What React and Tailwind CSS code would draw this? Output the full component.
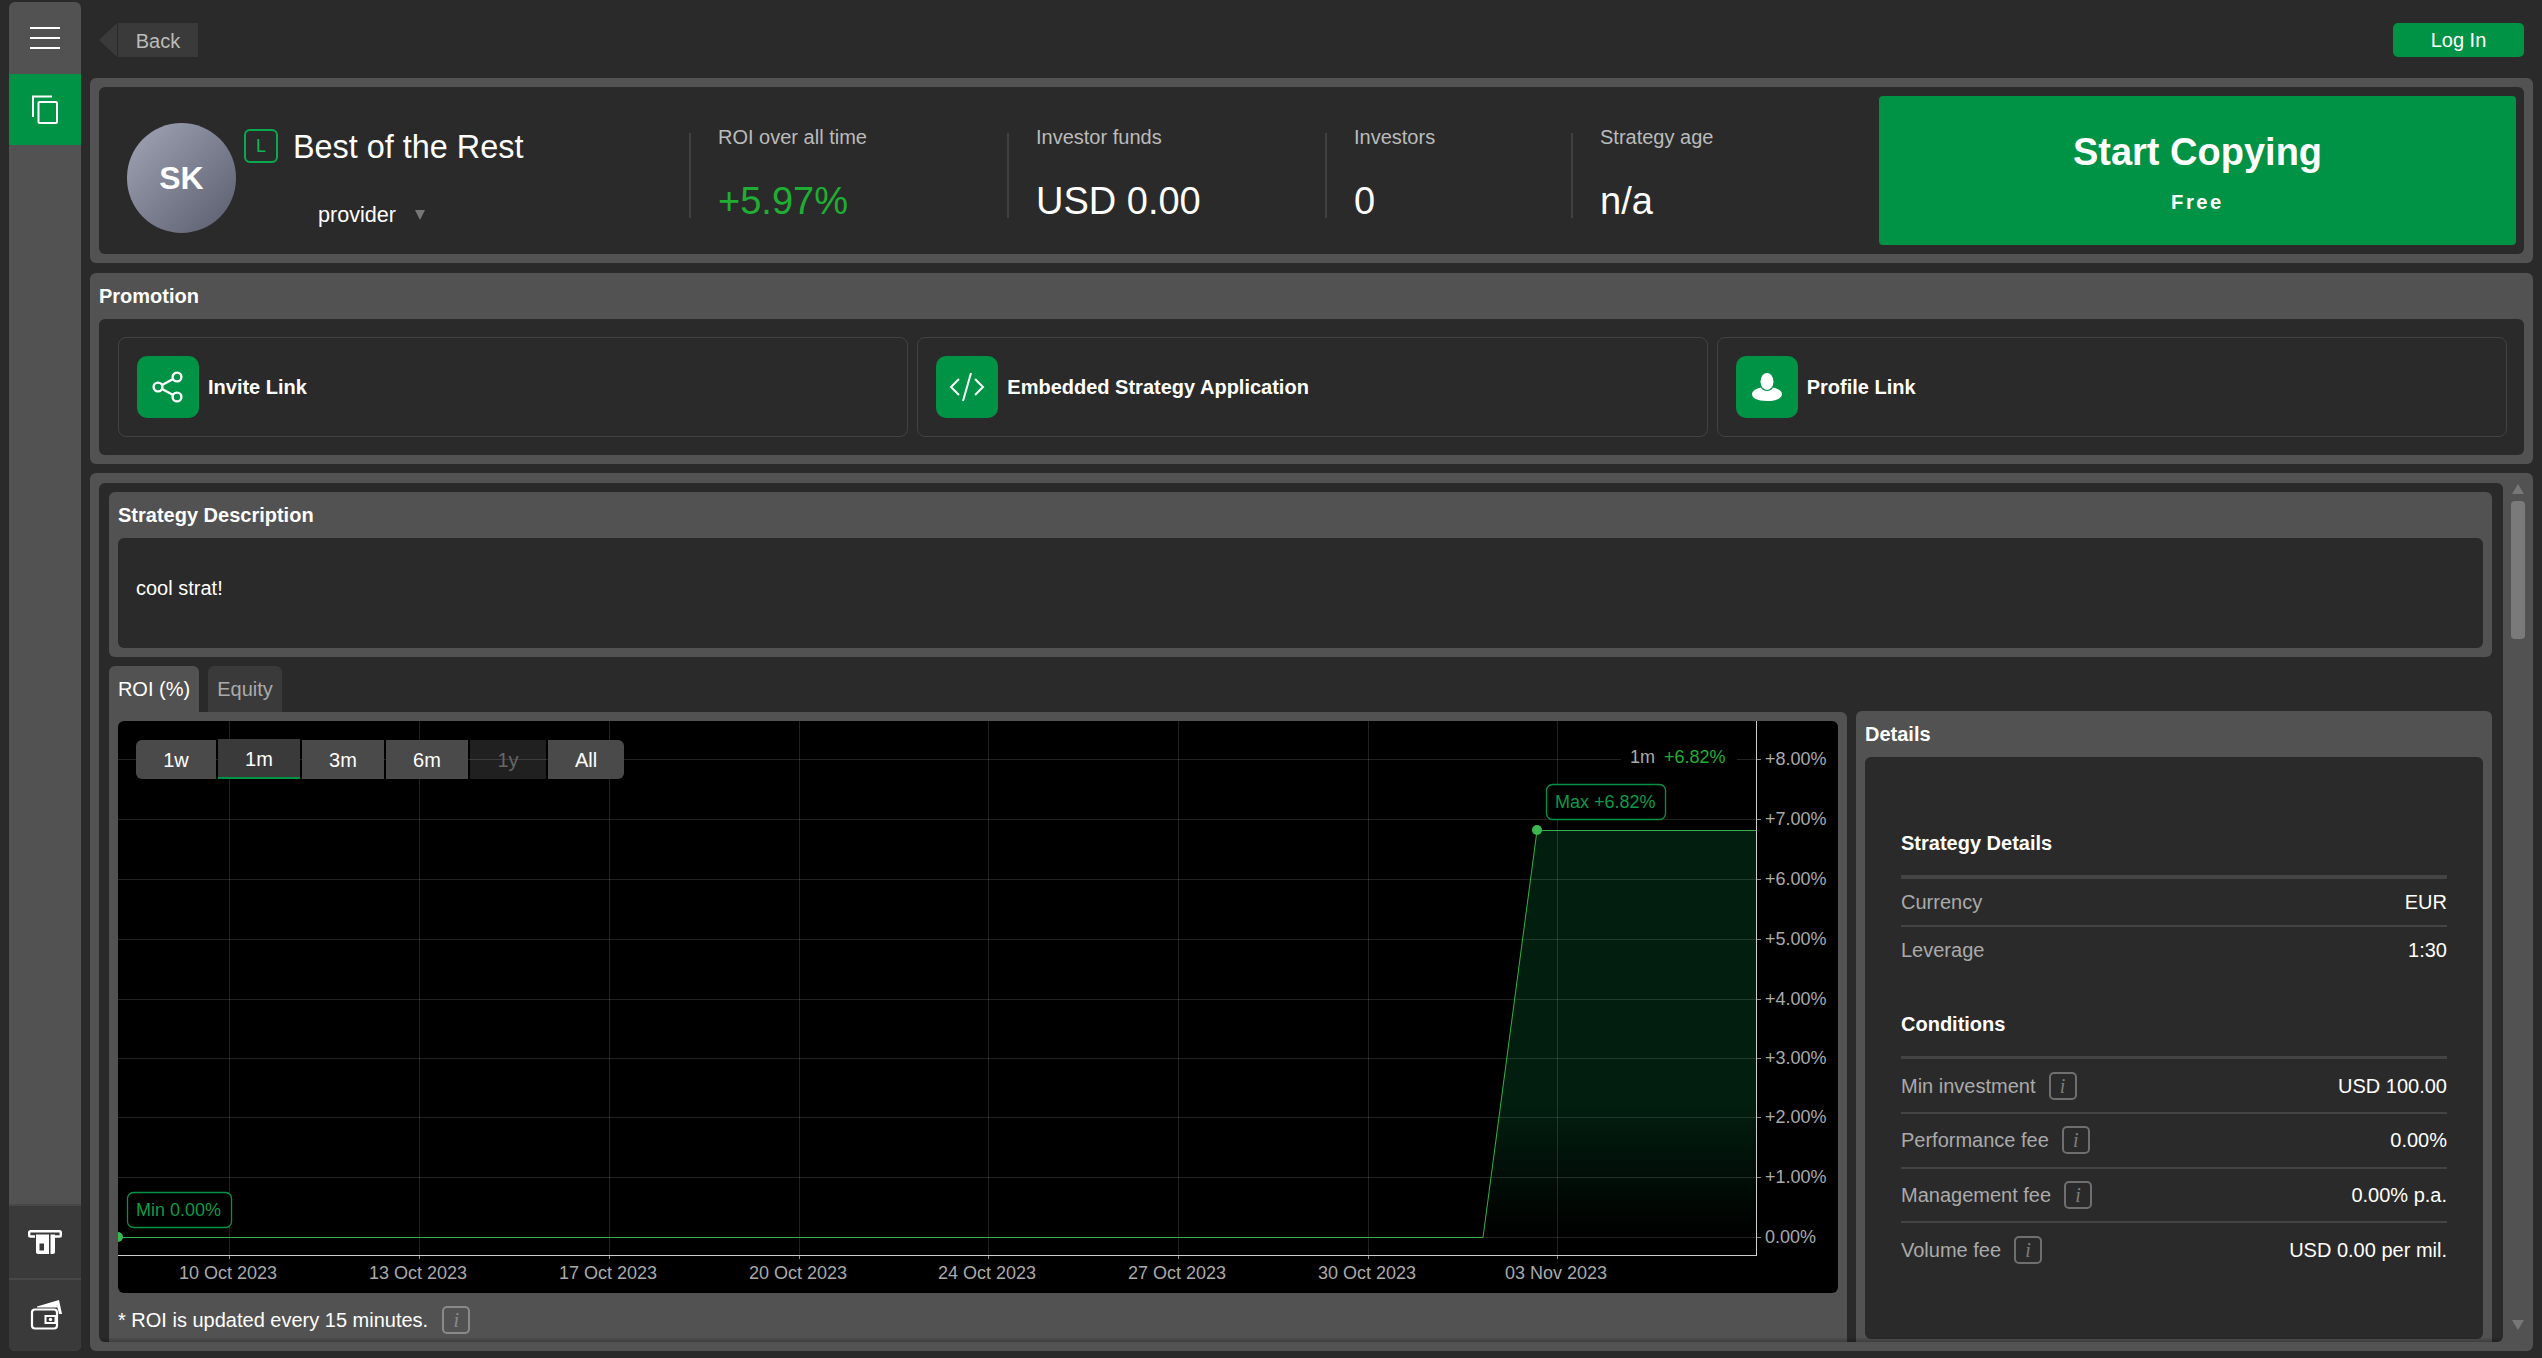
import React from "react";

const yTicks = [
  { y: 759, label: "+8.00%" },
  { y: 819, label: "+7.00%" },
  { y: 879, label: "+6.00%" },
  { y: 939, label: "+5.00%" },
  { y: 999, label: "+4.00%" },
  { y: 1058, label: "+3.00%" },
  { y: 1117, label: "+2.00%" },
  { y: 1177, label: "+1.00%" },
  { y: 1237, label: "0.00%" },
];

const xTicks = [
  { x: 229, label: "10 Oct 2023" },
  { x: 419, label: "13 Oct 2023" },
  { x: 609, label: "17 Oct 2023" },
  { x: 799, label: "20 Oct 2023" },
  { x: 988, label: "24 Oct 2023" },
  { x: 1178, label: "27 Oct 2023" },
  { x: 1368, label: "30 Oct 2023" },
  { x: 1557, label: "03 Nov 2023" },
];

const ranges = [
  { label: "1w", cls: "w-[80px] h-[39px] rounded-l-[6px] bg-[#4a4a4a] text-white" },
  { label: "1m", cls: "w-[82px] h-[40px] -mt-px pt-[2px] bg-[#3a3a3a] text-white border-b-2 border-[#009245]" },
  { label: "3m", cls: "w-[82px] h-[39px] bg-[#4a4a4a] text-white" },
  { label: "6m", cls: "w-[82px] h-[39px] bg-[#4a4a4a] text-white" },
  { label: "1y", cls: "w-[76px] h-[39px] bg-[#ffffff20] text-[#666666]" },
  { label: "All", cls: "w-[76px] h-[39px] rounded-r-[6px] bg-[#4a4a4a] text-white" },
];

function InfoIcon({ light }) {
  return (
    <span className={`inline-flex w-[28px] h-[28px] items-center justify-center rounded-[5px] border-2 font-[family-name:'Liberation_Serif',serif] italic text-[20px] leading-none ${light ? "border-[#8a8a8a] text-[#8a8a8a]" : "border-[#6f6f6f] text-[#7d7d7d]"}`}>
      i
    </span>
  );
}

function Stat({ label, value, width, green }) {
  return (
    <div className={`${width} h-[85px] self-start mt-[46px] border-l-2 border-[#404040] pl-[27px] flex flex-col justify-between`}>
      <div className="h-[8px] leading-[8px] text-[20px] text-[#bbbbbb]">{label}</div>
      <div className={`leading-[34px] text-[38px] ${green ? "text-[#1fae33]" : "text-white"}`}>{value}</div>
    </div>
  );
}

function PromoCard({ title, children }) {
  return (
    <div className="h-[100px] rounded-[8px] border border-[#424242] flex items-center pl-[18px]">
      <div className="w-[62px] h-[62px] rounded-[10px] bg-[#009245] flex items-center justify-center">{children}</div>
      <span className="ml-[9px] text-[20px] font-bold text-white">{title}</span>
    </div>
  );
}

function DetailRow({ label, value, info, h, last }) {
  return (
    <div className={`${h} flex items-center justify-between text-[20px] ${last ? "" : "border-b-2 border-[#444444]"}`}>
      <span className="flex items-center gap-[13px] text-[#aaaaaa]">
        {label}
        {info && <InfoIcon />}
      </span>
      <span className="text-white">{value}</span>
    </div>
  );
}

function Chart() {
  return (
    <div className="relative w-[1720px] h-[572px] rounded-[6px] overflow-hidden bg-black">
      <svg className="block" width="1720" height="572" viewBox="118 721 1720 572">
        <defs>
          <linearGradient id="roiFill" x1="0" y1="830" x2="0" y2="1237" gradientUnits="userSpaceOnUse">
            <stop offset="0" stopColor="#021e0f" />
            <stop offset="0.68" stopColor="#021e0f" />
            <stop offset="1" stopColor="#021e0f" stopOpacity="0" />
          </linearGradient>
        </defs>
        <polygon points="1483,1237 1537,830 1756.500,830 1756.500,1237" fill="url(#roiFill)" />
        {yTicks.map((t) => (
          <g key={t.y}>
            <line x1="118" x2="1756.5" y1={t.y + 0.5} y2={t.y + 0.5} stroke="#ffffff" strokeOpacity="0.13" />
            <line x1="1756.5" x2="1761" y1={t.y + 0.5} y2={t.y + 0.5} stroke="#888888" />
            <text x="1765" y={t.y + 5.5} fontSize="18" fill="#aaaaaa">{t.label}</text>
          </g>
        ))}
        {xTicks.map((t) => (
          <g key={t.x}>
            <line x1={t.x + 0.5} x2={t.x + 0.5} y1="721" y2="1255" stroke="#ffffff" strokeOpacity="0.13" />
            <line x1={t.x + 0.5} x2={t.x + 0.5} y1="1255" y2="1259" stroke="#888888" />
            <text x={t.x - 1} y="1279" fontSize="18" fill="#aaaaaa" textAnchor="middle">{t.label}</text>
          </g>
        ))}
        <line x1="1756.5" x2="1756.5" y1="721" y2="1255.5" stroke="#cccccc" />
        <line x1="118" x2="1757" y1="1255.5" y2="1255.5" stroke="#cccccc" />
        <polyline points="118,1237.5 1483,1237.5 1537,830.5 1756.5,830.5" fill="none" stroke="#34b04c" strokeWidth="1" />
        <circle cx="1537" cy="830" r="5" fill="#3cb850" />
        <circle cx="118" cy="1237" r="5" fill="#3cb850" />
        <rect x="1621" y="745" width="116" height="24" fill="#000000" />
        <text x="1630" y="763" fontSize="18" fill="#aaaaaa">1m</text>
        <text x="1664" y="763" fontSize="18" fill="#1fae33">+6.82%</text>
        <rect x="1546.5" y="784.5" width="119" height="35" rx="6" fill="#000000" stroke="#009245" strokeWidth="1.3" />
        <text x="1555" y="808" fontSize="18" fill="#0a9a48">Max +6.82%</text>
        <rect x="127.5" y="1192.5" width="104" height="35" rx="6" fill="#000000" stroke="#009245" strokeWidth="1.3" />
        <text x="136" y="1216" fontSize="18" fill="#0a9a48">Min 0.00%</text>
      </svg>
      <div className="absolute left-[18px] top-[19px] flex items-start gap-[2px] text-[20px]">
        {ranges.map((r) => (
          <div key={r.label} className={`flex items-center justify-center ${r.cls}`}>{r.label}</div>
        ))}
      </div>
    </div>
  );
}

export default function App() {
  return (
    <div className="w-full h-screen overflow-hidden flex bg-[#2a2a2a] text-white font-[family-name:'Liberation_Sans',Arial,sans-serif] pl-[9px] pt-[2px] pb-[7px]">
      {/* sidebar */}
      <div className="w-[72px] flex flex-col rounded-[6px] overflow-hidden bg-[#525252] shrink-0">
        <div className="h-[72px] flex flex-col items-center justify-center gap-[8px]">
          <div className="w-[30px] h-[2px] bg-white" />
          <div className="w-[30px] h-[2px] bg-white" />
          <div className="w-[30px] h-[2px] bg-white" />
        </div>
        <div className="h-[71px] bg-[#009245] flex items-center justify-center">
          <svg width="26" height="29" viewBox="0 0 26 29" fill="none" stroke="white" strokeWidth="2">
            <path d="M1 22V1.5H20" />
            <rect x="6.5" y="7" width="18.5" height="21" rx="1" />
          </svg>
        </div>
        <div className="flex-1" />
        <div className="h-[74px] bg-[#3a3a3a] border-t-2 border-[#484848] flex items-center justify-center">
          <svg width="34" height="24" viewBox="0 0 34 24">
            <path d="M7 6.500H2.500a1.300 1.300 0 0 1-1.300-1.300V2.500a1.300 1.300 0 0 1 1.300-1.300h29a1.300 1.300 0 0 1 1.300 1.300v2.700a1.300 1.300 0 0 1-1.300 1.300H27" fill="none" stroke="white" strokeWidth="2.400" />
            <path d="M8 4.500h13v19.500H10a2 2 0 0 1-2-2z" fill="white" />
            <path d="M22.500 4.500H27v17.500a2 2 0 0 1-2 2h-2.500z" fill="white" />
            <rect x="11.5" y="13.5" width="4.500" height="7" fill="#3a3a3a" />
          </svg>
        </div>
        <div className="h-[73px] bg-[#3a3a3a] border-t-2 border-[#484848] flex items-center justify-center">
          <svg width="34" height="32" viewBox="0 0 34 32" fill="none">
            <path d="M9 6.500 31 0l3 14h-3l-1.500-6.500L9 7.500z" fill="white" />
            <rect x="4" y="9.500" width="25" height="19" rx="3" stroke="white" strokeWidth="2.200" />
            <rect x="17.500" y="16" width="10" height="7" fill="#3a3a3a" stroke="white" strokeWidth="2" />
            <circle cx="22.500" cy="19.500" r="1.700" fill="white" />
          </svg>
        </div>
      </div>

      {/* main column */}
      <div className="w-[2443px] ml-[9px] flex flex-col shrink-0">
        <div className="h-[76px] shrink-0 flex items-start justify-between pt-[21px] pl-[9px] pr-[9px]">
          <div className="flex items-center h-[34px]">
            <div className="w-0 h-0 border-y-[17px] border-y-transparent border-r-[18px] border-r-[#3a3a3a]" />
            <div className="w-[80px] h-[34px] pt-[2px] ml-px bg-[#3a3a3a] flex items-center justify-center text-[20px] text-[#bbbbbb]">Back</div>
          </div>
          <div className="w-[131px] h-[34px] bg-[#009245] rounded-[5px] flex items-center justify-center text-[20px] text-white">Log In</div>
        </div>

        {/* strategy header */}
        <div className="h-[185px] shrink-0 rounded-[6px] bg-[#525252] p-[9px]">
          <div className="h-[167px] rounded-[6px] bg-[#2a2a2a] flex">
            <div className="w-[590px] shrink-0 flex items-start">
              <div className="w-[109px] h-[110px] mt-[36px] ml-[28px] rounded-full bg-gradient-to-br from-[#a2a6b6] to-[#595d6d] flex items-center justify-center text-[32px] font-bold">SK</div>
              <div className="ml-[8px] mt-[42px]">
                <div className="flex items-center gap-[15px] h-[34px]">
                  <div className="w-[34px] h-[34px] rounded-[6px] border-2 border-[#0aa84f] flex items-center justify-center text-[18px] text-[#0bb557]">L</div>
                  <div className="text-[32.4px] leading-none pt-[2px] text-white">Best of the Rest</div>
                </div>
                <div className="mt-[39px] pl-[74px] flex items-center h-[26px]">
                  <span className="text-[21.6px] leading-none text-white">provider</span>
                  <svg className="ml-[19px]" width="10" height="10" viewBox="0 0 10 10"><path d="M0 0h10L5 10z" fill="#777777" /></svg>
                </div>
              </div>
            </div>
            <Stat width="w-[318px]" label="ROI over all time" value="+5.97%" green />
            <Stat width="w-[318px]" label="Investor funds" value="USD 0.00" />
            <Stat width="w-[246px]" label="Investors" value="0" />
            <Stat width="w-[308px]" label="Strategy age" value="n/a" />
            <div className="w-[637px] h-[149px] mt-[9px] rounded-[4px] bg-[#009245] flex flex-col items-center pt-[34px]">
              <div className="text-[38px] leading-[44px] font-bold text-white">Start Copying</div>
              <div className="mt-[16px] text-[20.25px] leading-[24px] font-bold tracking-[2.5px] text-white">Free</div>
            </div>
          </div>
        </div>

        {/* promotion */}
        <div className="h-[191px] shrink-0 mt-[10px] rounded-[6px] bg-[#525252] px-[9px] pb-[9px] flex flex-col">
          <div className="h-[46px] flex items-center text-[20px] font-bold">Promotion</div>
          <div className="h-[136px] rounded-[6px] bg-[#2a2a2a] pl-[19px] pr-[17px] py-[18px] grid grid-cols-3 gap-[9px]">
            <PromoCard title="Invite Link">
              <svg width="32" height="32" viewBox="0 0 32 32" fill="none" stroke="white" strokeWidth="2.4">
                <circle cx="6" cy="16" r="4.4" />
                <circle cx="25" cy="6" r="4.4" />
                <circle cx="25" cy="26" r="4.4" />
                <path d="M10 14 21.2 8M10 18l11.2 6" />
              </svg>
            </PromoCard>
            <PromoCard title="Embedded Strategy Application">
              <svg width="36" height="30" viewBox="0 0 36 30" fill="none" stroke="white" strokeWidth="2">
                <path d="M10 7 2 15l8 8M26 7l8 8-8 8M22 1l-8 28" />
              </svg>
            </PromoCard>
            <PromoCard title="Profile Link">
              <svg width="30" height="28" viewBox="0 0 30 28" fill="white">
                <ellipse cx="15" cy="8.500" rx="6.500" ry="8.500" />
                <path d="M9 14.500c1.500 4.500 10.500 4.500 12 0 5 1.200 9 3.500 9 6.500 0 4-5 7-15 7S0 25 0 21c0-3 4-5.300 9-6.500z" />
              </svg>
            </PromoCard>
          </div>
        </div>

        {/* strategy body */}
        <div className="flex-1 min-h-0 mt-[9px] rounded-[6px] bg-[#525252] pl-[9px] pt-[10px] pb-[9px] flex">
          <div className="relative w-[2404px] h-full shrink-0 rounded-[6px] bg-[#2a2a2a] overflow-hidden pl-[10px] pr-[11px] pt-[9px]">
            <div className="rounded-[6px] bg-[#525252] px-[9px] pb-[9px]">
              <div className="h-[46px] flex items-center text-[20px] font-bold">Strategy Description</div>
              <div className="h-[110px] rounded-[6px] bg-[#2a2a2a] pl-[18px] pb-[10px] flex items-center text-[20px] text-white">cool strat!</div>
            </div>

            <div className="mt-[9px] flex items-start gap-[9px]">
              <div className="w-[1738px] shrink-0">
                <div className="flex gap-[9px] h-[46px] text-[20px]">
                  <div className="w-[90px] rounded-t-[6px] bg-[#525252] flex items-center justify-center text-white">ROI (%)</div>
                  <div className="w-[74px] rounded-t-[6px] bg-[#3a3a3a] flex items-center justify-center text-[#aaaaaa]">Equity</div>
                </div>
                <div className="rounded-tr-[6px] bg-[#525252] p-[9px] pb-[30px]">
                  <Chart />
                  <div className="mt-[12px] flex items-center gap-[14px] text-[20px] text-white">
                    * ROI is updated every 15 minutes.
                    <InfoIcon light />
                  </div>
                </div>
              </div>

              <div className="w-[636px] shrink-0 mt-[45px] rounded-[6px] bg-[#525252] px-[9px] pb-[9px]">
                <div className="h-[46px] flex items-center text-[20px] font-bold">Details</div>
                <div className="h-[582px] rounded-[6px] bg-[#2a2a2a] px-[36px] pt-[66px]">
                  <div className="h-[40px] flex items-center text-[20px] font-bold">Strategy Details</div>
                  <div className="mt-[12px] h-[4px] bg-[#444444]" />
                  <DetailRow label="Currency" value="EUR" h="h-[48px]" />
                  <DetailRow label="Leverage" value="1:30" h="h-[46px]" last />
                  <div className="mt-[31px] h-[40px] flex items-center text-[20px] font-bold">Conditions</div>
                  <div className="mt-[12px] h-[3px] bg-[#444444]" />
                  <DetailRow label="Min investment" value="USD 100.00" h="h-[55px]" info />
                  <DetailRow label="Performance fee" value="0.00%" h="h-[55px] pb-px" info />
                  <DetailRow label="Management fee" value="0.00% p.a." h="h-[54px]" info />
                  <DetailRow label="Volume fee" value="USD 0.00 per mil." h="h-[53px]" info last />
                </div>
              </div>
            </div>

            <div className="absolute left-0 right-0 bottom-0 h-[5px] bg-gradient-to-b from-transparent to-[#00000040]" />
          </div>

          {/* scrollbar */}
          <div className="flex-1 flex flex-col items-center">
            <svg className="mt-[1px]" width="12" height="10" viewBox="0 0 12 10"><path d="M0 10h12L6 0z" fill="#777777" /></svg>
            <div className="w-[14px] h-[138px] mt-[7px] rounded-[4px] bg-[#7a7a7a]" />
            <div className="flex-1" />
            <svg className="mb-[12px]" width="12" height="10" viewBox="0 0 12 10"><path d="M0 0h12L6 10z" fill="#777777" /></svg>
          </div>
        </div>
      </div>
    </div>
  );
}
